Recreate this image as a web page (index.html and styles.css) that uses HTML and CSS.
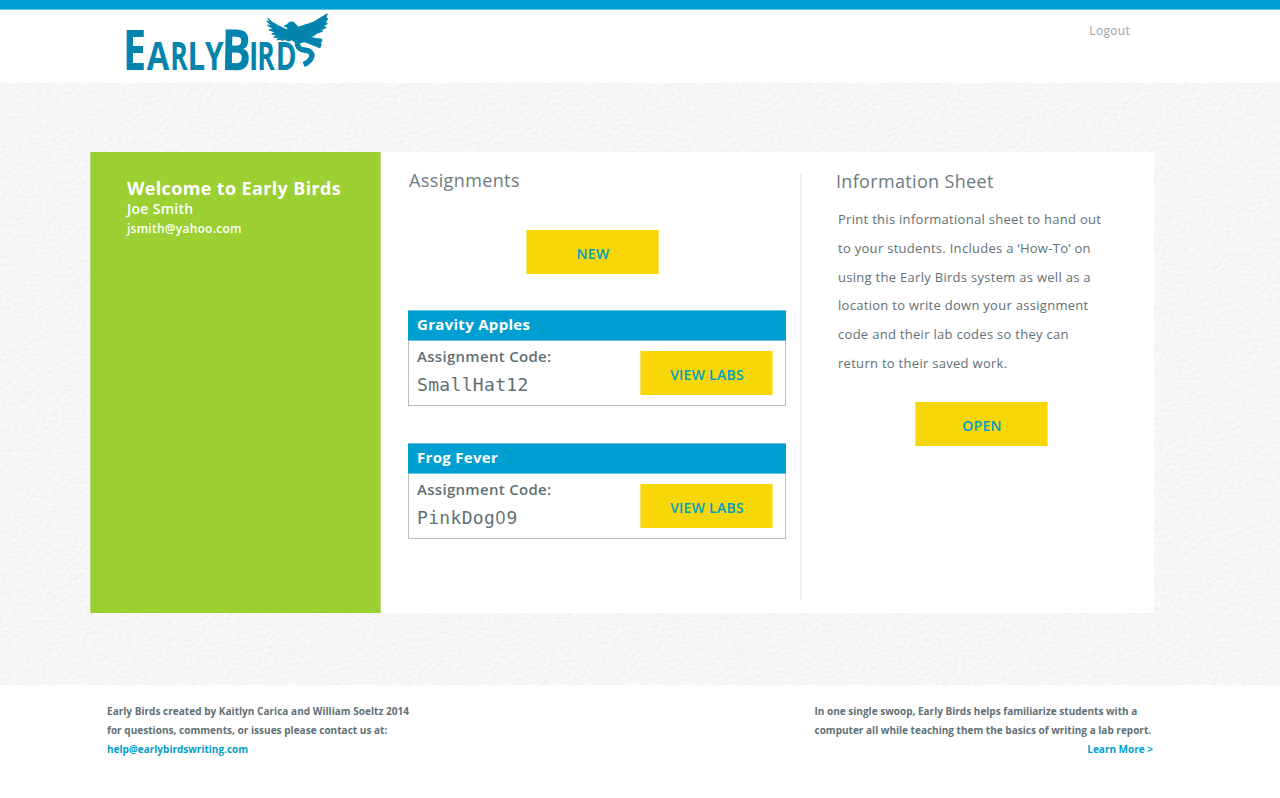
FILE: index.html
```html
<!DOCTYPE html>
<html lang="en">
<head>
<meta charset="utf-8">
<title>Early Birds</title>
<link rel="stylesheet" href="styles.css">
</head>
<body>
<header class="header">
  <svg class="logo" viewBox="0 0 206 62" role="img" aria-label="Early Birds">
    <g class="logo-text">
      <text transform="translate(-2 57.7) scale(.74 1)" font-size="56">E</text>
      <text transform="translate(21.8 57.7) scale(.84 1)" font-size="39">A</text>
      <text transform="translate(45.3 57.7) scale(.68 1)" font-size="39">R</text>
      <text transform="translate(62.4 57.7) scale(.8 1)" font-size="39">L</text>
      <text transform="translate(80 57.7) scale(.76 1)" font-size="39">Y</text>
      <text transform="translate(96 58) rotate(1) scale(.78 1)" font-size="57">B</text>
      <text transform="translate(124 57.7) scale(.72 1)" font-size="39">I</text>
      <text transform="translate(132.3 57.7) scale(.68 1)" font-size="39">R</text>
      <text transform="translate(150.8 57.7) scale(.72 1)" font-size="39">D</text>
    </g>
    <g transform="translate(130 -3.5) scale(.3333)">
      <path class="logo-tail" d="M131 92C124 108 128 119 140 123C150 127 158 123 166 131C178 143 165 160 146 168"/>
      <path class="logo-bird" d="M88 53L97 48C100 40 113 37 120 45L130 56C150 48 175 45 190 32L217 16L212 30L219 30L211 42L217 45L205 54L214 57L196 65L203 68L186 74L176 82L160 86L185 90L200 92L201 98L196 103L199 108L195 118L180 112L160 104L150 100L125 104L110 94L100 98L90 93L80 96L82 92L65 94L74 88L56 86L66 81L50 76L62 72L42 64L55 61L37 50L50 50L35 38L45 38L38 29L50 40L70 52L95 64L99 57Z"/>
    </g>
  </svg>
  <a class="logout">Logout</a>
</header>
<main class="stage">
  <svg class="paper" aria-hidden="true">
    <filter id="grain" x="0" y="0" width="100%" height="100%" color-interpolation-filters="sRGB">
      <feTurbulence type="fractalNoise" baseFrequency=".2 .28" numOctaves="3" seed="4"/>
      <feDiffuseLighting surfaceScale=".5" diffuseConstant="1.2" lighting-color="#fff">
        <feDistantLight azimuth="235" elevation="54"/>
      </feDiffuseLighting>
    </filter>
    <rect width="100%" height="100%" filter="url(#grain)"/>
  </svg>
  <div class="board">
    <aside class="welcome">
      <h1>Welcome to Early Birds</h1>
      <p class="name">Joe Smith</p>
      <p class="email">jsmith@yahoo.com</p>
    </aside>
    <section class="assignments">
      <h2>Assignments</h2>
      <a class="button new">NEW</a>
      <article class="card">
        <h3>Gravity Apples</h3>
        <div class="card-body">
          <div><p class="label">Assignment Code:</p><p class="code">SmallHat12</p></div>
          <a class="button">VIEW LABS</a>
        </div>
      </article>
      <article class="card">
        <h3>Frog Fever</h3>
        <div class="card-body">
          <div><p class="label">Assignment Code:</p><p class="code">PinkDog<span class="zero">0</span>9</p></div>
          <a class="button">VIEW LABS</a>
        </div>
      </article>
    </section>
    <section class="info">
      <h2>Information Sheet</h2>
      <p>Print this informational sheet to hand out<br>to your students. Includes a ‘How-To’ on<br>using the Early Birds system as well as a<br>location to write down your assignment<br>code and their lab codes so they can<br>return to their saved work.</p>
      <a class="button open">OPEN</a>
    </section>
  </div>
</main>
<footer class="footer">
  <div class="credits">Early Birds created by Kaitlyn Carica and William Soeltz 2014<br>for questions, comments, or issues please contact us at:<br><a class="link mail">help@earlybirdswriting.com</a></div>
  <div class="about">In one single swoop, Early Birds helps familiarize students with a<br>computer all while teaching them the basics of writing a lab report.<a class="link more">Learn More &gt;</a></div>
</footer>
</body>
</html>
```
FILE: styles.css
```css
* { box-sizing: border-box; margin: 0; }
body { font-family: "Open Sans", "Noto Sans", sans-serif; color: #5f7075; background: #fff; height: 798px; overflow: hidden; }
.header { height: 83px; border-top: 9px solid #009fd1; background: linear-gradient(#62c4e3 1px, #fff 1px); display: flex; justify-content: space-between; padding: 2.5px 150px 0 125px; }
.logo { width: 206px; height: 62px; fill: #0284ad; overflow: visible; }
.logo-text { font-family: "Open Sans", sans-serif; font-weight: 700; }
.logo-tail { fill: none; stroke: #0284ad; stroke-width: 16; }
.logo-bird { stroke: #0284ad; stroke-width: 3; stroke-linejoin: round; }
.logout { font-size: 12px; line-height: 18px; letter-spacing: .3px; color: #98a2a5; margin-top: 10.5px; }
.stage { position: relative; height: 602px; padding: 69px 0 0 90px; background: #f7f7f7; }
.paper { position: absolute; inset: 0; width: 100%; height: 100%; opacity: .18; }
.board { position: relative; display: flex; width: 1064px; height: 461px; background: #fff; }
.welcome { width: 291px; background: #9bcf32; border: solid #b9de71; border-width: 0 1px; color: #fff; padding: 24px 0 0 36px; white-space: nowrap; }
.welcome h1 { font-size: 18px; line-height: 25px; letter-spacing: .36px; }
.name { font-size: 14px; line-height: 16px; font-weight: 600; letter-spacing: .3px; }
.email { font-size: 12px; line-height: 24px; font-weight: 600; letter-spacing: .24px; }
h2 { font-size: 18px; line-height: 24px; font-weight: 400; letter-spacing: .33px; color: #6b7b80; }
.assignments { width: 421px; height: 426px; margin-top: 22px; padding: 0 15px 0 27px; border-right: 2px solid #f0f1f1; display: flex; flex-direction: column; }
.assignments h2 { margin: -6px 0 0 1px; letter-spacing: .38px; }
.button { display: block; width: 133px; height: 44px; background: #f7d708; border: solid #fbe76a; border-width: 0 1px; color: #009fc7; font-size: 14px; font-weight: 600; line-height: 48px; letter-spacing: .25px; text-align: center; padding-left: 1px; }
.new { margin: 38px 0 36px 118px; }
.card { width: 378px; height: 96px; margin-bottom: 37px; border: 1px solid #b3bebe; border-top: 0; }
.card h3 { height: 31px; margin: 0 -1px; padding-left: 9px; background: #009fd1; border: solid #62c4e3; border-width: 1px 0; color: #fff; font-size: 15px; line-height: 27px; letter-spacing: .3px; }
.card-body { display: flex; justify-content: space-between; padding: 10px 12px 0 8px; }
.label { font-size: 15px; line-height: 20px; font-weight: 600; margin-top: -5px; letter-spacing: .3px; }
.code { height: 24px; font: 18px/24px "DejaVu Sans Mono", monospace; letter-spacing: .33px; margin-top: 7px; }
.zero { font-family: "Open Sans", sans-serif; line-height: 1; letter-spacing: .9px; }
.info { padding: 17px 0 0 34px; white-space: nowrap; }
.info p { font-size: 13px; line-height: 28.75px; margin: 12px 0 0 2px; letter-spacing: .29px; }
.open { margin: 24px 0 0 79px; }
.footer { display: flex; justify-content: space-between; padding: 17px 127px 0 107px; font-size: 10px; line-height: 19px; font-weight: 700; letter-spacing: .03px; white-space: nowrap; }
.about { width: 338.5px; letter-spacing: .01px; }
.link { color: #009fc7; letter-spacing: 0; }
.more { display: block; text-align: right; color: #009fd1; }
```
